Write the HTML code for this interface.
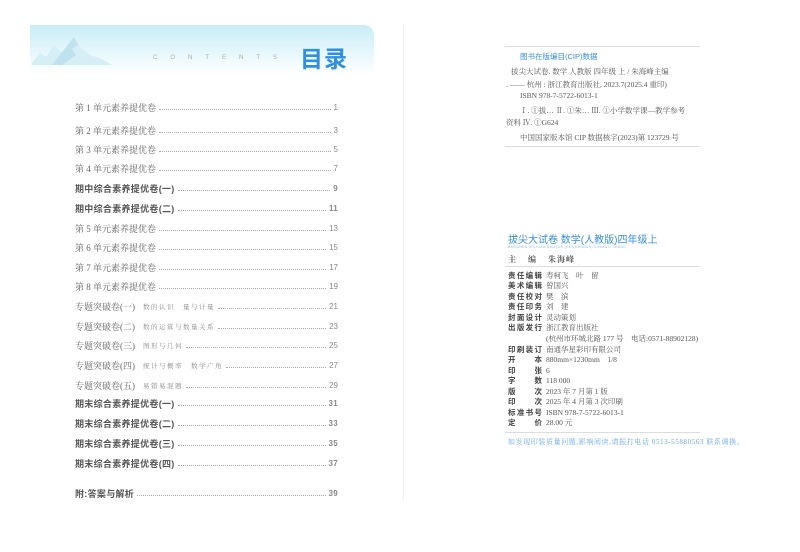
<!DOCTYPE html>
<html><head><meta charset="utf-8"><style>
*{margin:0;padding:0;box-sizing:border-box}
body{width:800px;height:552px;background:#fff;position:relative;overflow:hidden;font-family:"Liberation Serif","Noto Serif CJK SC",serif;color:#555}
.a{position:absolute;white-space:nowrap}
.row{position:absolute;left:75px;width:263px;display:flex;align-items:center;font-size:9px;height:12px;color:#666}
.row .d{flex:1;border-bottom:1px dotted #aaa;margin:0 3px;height:0;position:relative;top:2px}
.row .n{font-family:"Liberation Sans",sans-serif;font-size:8px;color:#888}
.b{font-family:"Liberation Sans","Noto Sans CJK SC",sans-serif;font-weight:bold;color:#555;letter-spacing:.3px}
.s{font-size:6.5px;color:#888;margin-left:8px;letter-spacing:1.5px}
.r{position:absolute;left:508px;font-size:7.5px;color:#555}
.k{display:inline-block;width:34px;font-family:"Liberation Sans","Noto Sans CJK SC",sans-serif;font-weight:bold;color:#444;text-align-last:justify;margin-right:4px}
</style></head><body>
<div class="a" style="left:403px;top:25px;width:1px;height:475px;background:#eee"></div>
<div class="a" style="left:30px;top:25px;width:344px;height:50px;border-radius:0 10px 0 0;background:linear-gradient(180deg,#c9ecf6 0%,#e4f6fb 50%,#fff 100%)"></div>
<svg class="a" style="left:32px;top:35px" width="90" height="30" viewBox="0 0 90 30"><path d="M0 28 L8 18 L14 22 L22 10 L30 18 L42 2 L50 14 L58 20 L70 24 L80 30 L0 30Z" fill="#d6eef6"/><path d="M42 2 L46 10 L40 14 L44 20 L36 26 L30 30 L20 30Z" fill="#bfe2ee"/></svg>
<div class="a" style="left:153px;top:55px;font-family:'Liberation Sans',sans-serif;font-size:6px;letter-spacing:13px;color:#aaa">CONTENTS</div>
<div class="a" style="left:300px;top:40px;font-family:'Liberation Sans','Noto Sans CJK SC',sans-serif;font-weight:bold;font-size:23px;color:#2f8fe0;letter-spacing:1px">目录</div>

<div class="row" style="top:101px">第 1 单元素养提优卷<span class="d"></span><span class="n">1</span></div>
<div class="row" style="top:124px">第 2 单元素养提优卷<span class="d"></span><span class="n">3</span></div>
<div class="row" style="top:143px">第 3 单元素养提优卷<span class="d"></span><span class="n">5</span></div>
<div class="row" style="top:162px">第 4 单元素养提优卷<span class="d"></span><span class="n">7</span></div>
<div class="row b" style="top:182px">期中综合素养提优卷(一)<span class="d"></span><span class="n">9</span></div>
<div class="row b" style="top:202px">期中综合素养提优卷(二)<span class="d"></span><span class="n">11</span></div>
<div class="row" style="top:222px">第 5 单元素养提优卷<span class="d"></span><span class="n">13</span></div>
<div class="row" style="top:241px">第 6 单元素养提优卷<span class="d"></span><span class="n">15</span></div>
<div class="row" style="top:261px">第 7 单元素养提优卷<span class="d"></span><span class="n">17</span></div>
<div class="row" style="top:280px">第 8 单元素养提优卷<span class="d"></span><span class="n">19</span></div>
<div class="row" style="top:300px">专题突破卷(一)<span class="s">数的认识　量与计量</span><span class="d"></span><span class="n">21</span></div>
<div class="row" style="top:320px">专题突破卷(二)<span class="s">数的运算与数量关系</span><span class="d"></span><span class="n">23</span></div>
<div class="row" style="top:339px">专题突破卷(三)<span class="s">图形与几何</span><span class="d"></span><span class="n">25</span></div>
<div class="row" style="top:359px">专题突破卷(四)<span class="s">统计与概率　数学广角</span><span class="d"></span><span class="n">27</span></div>
<div class="row" style="top:379px">专题突破卷(五)<span class="s">易错易混题</span><span class="d"></span><span class="n">29</span></div>
<div class="row b" style="top:397px">期末综合素养提优卷(一)<span class="d"></span><span class="n">31</span></div>
<div class="row b" style="top:417px">期末综合素养提优卷(二)<span class="d"></span><span class="n">33</span></div>
<div class="row b" style="top:437px">期末综合素养提优卷(三)<span class="d"></span><span class="n">35</span></div>
<div class="row b" style="top:457px">期末综合素养提优卷(四)<span class="d"></span><span class="n">37</span></div>
<div class="row b" style="top:487px">附:答案与解析<span class="d"></span><span class="n">39</span></div>

<div class="a" style="left:505px;top:46px;width:195px;border-top:1px solid #ddd"></div>
<div class="a" style="left:520px;top:51px;font-size:7.5px;color:#3a8fdc;font-family:'Liberation Sans','Noto Sans CJK SC',sans-serif">图书在版编目(CIP)数据</div>
<div class="r" style="top:66px;left:511px">拔尖大试卷. 数学  人教版  四年级  上 / 朱海峰主编</div>
<div class="r" style="top:79px;left:506px">. —— 杭州 : 浙江教育出版社, 2023.7(2025.4 重印)</div>
<div class="r" style="top:91px;left:520px">ISBN 978-7-5722-6013-1</div>
<div class="r" style="top:105px;left:520px">Ⅰ. ①拔… Ⅱ. ①朱… Ⅲ. ①小学数学课—教学参考</div>
<div class="r" style="top:117px;left:506px">资料 Ⅳ. ①G624</div>
<div class="r" style="top:132px;left:520px">中国国家版本馆 CIP 数据核字(2023)第 123729 号</div>
<div class="a" style="left:505px;top:146px;width:195px;border-top:1px solid #ddd"></div>

<div class="a" style="left:508px;top:231px;font-family:'Liberation Sans','Noto Sans CJK SC',sans-serif;font-size:10px;color:#3a8fdc">拔尖大试卷  数学(人教版)四年级上</div>
<div class="a" style="left:508px;top:245px;font-family:'Liberation Sans',sans-serif;font-size:3.5px;color:#8cc0ea;letter-spacing:.3px">BAJIANDA SHIJUAN SHUXUE (RENJIAOBAN) SINIANJI SHANG</div>
<div class="r" style="top:254px;font-weight:bold;letter-spacing:5px;font-size:8px">主 编 <span style="letter-spacing:1px">朱海峰</span></div>
<div class="a" style="left:505px;top:266px;width:195px;border-top:1px solid #ddd"></div>
<div class="r" style="top:270px"><span class="k">责任编辑</span>寿柯飞　叶　留</div>
<div class="r" style="top:280px"><span class="k">美术编辑</span>曾国兴</div>
<div class="r" style="top:291px"><span class="k">责任校对</span>樊　滨</div>
<div class="r" style="top:301px"><span class="k">责任印务</span>刘　建</div>
<div class="r" style="top:312px"><span class="k">封面设计</span>灵动策划</div>
<div class="r" style="top:322px"><span class="k">出版发行</span>浙江教育出版社</div>
<div class="r" style="top:333px;left:546px">(杭州市环城北路 177 号　电话:0571-88902128)</div>
<div class="r" style="top:344px"><span class="k">印刷装订</span>南通华星彩印有限公司</div>
<div class="r" style="top:354px"><span class="k">开　本</span>880mm×1230mm　1/8</div>
<div class="r" style="top:365px"><span class="k">印　张</span>6</div>
<div class="r" style="top:375px"><span class="k">字　数</span>118 000</div>
<div class="r" style="top:386px"><span class="k">版　次</span>2023 年 7 月第 1 版</div>
<div class="r" style="top:396px"><span class="k">印　次</span>2025 年 4 月第 3 次印刷</div>
<div class="r" style="top:407px"><span class="k">标准书号</span>ISBN 978-7-5722-6013-1</div>
<div class="r" style="top:417px"><span class="k">定　价</span>28.00 元</div>
<div class="a" style="left:505px;top:432px;width:195px;border-top:1px solid #ddd"></div>
<div class="a" style="left:508px;top:437px;font-size:7px;color:#6aaae6;letter-spacing:.6px">如发现印装质量问题,影响阅读,请振打电话 0513-55880563 联系调换。</div>
</body></html>
